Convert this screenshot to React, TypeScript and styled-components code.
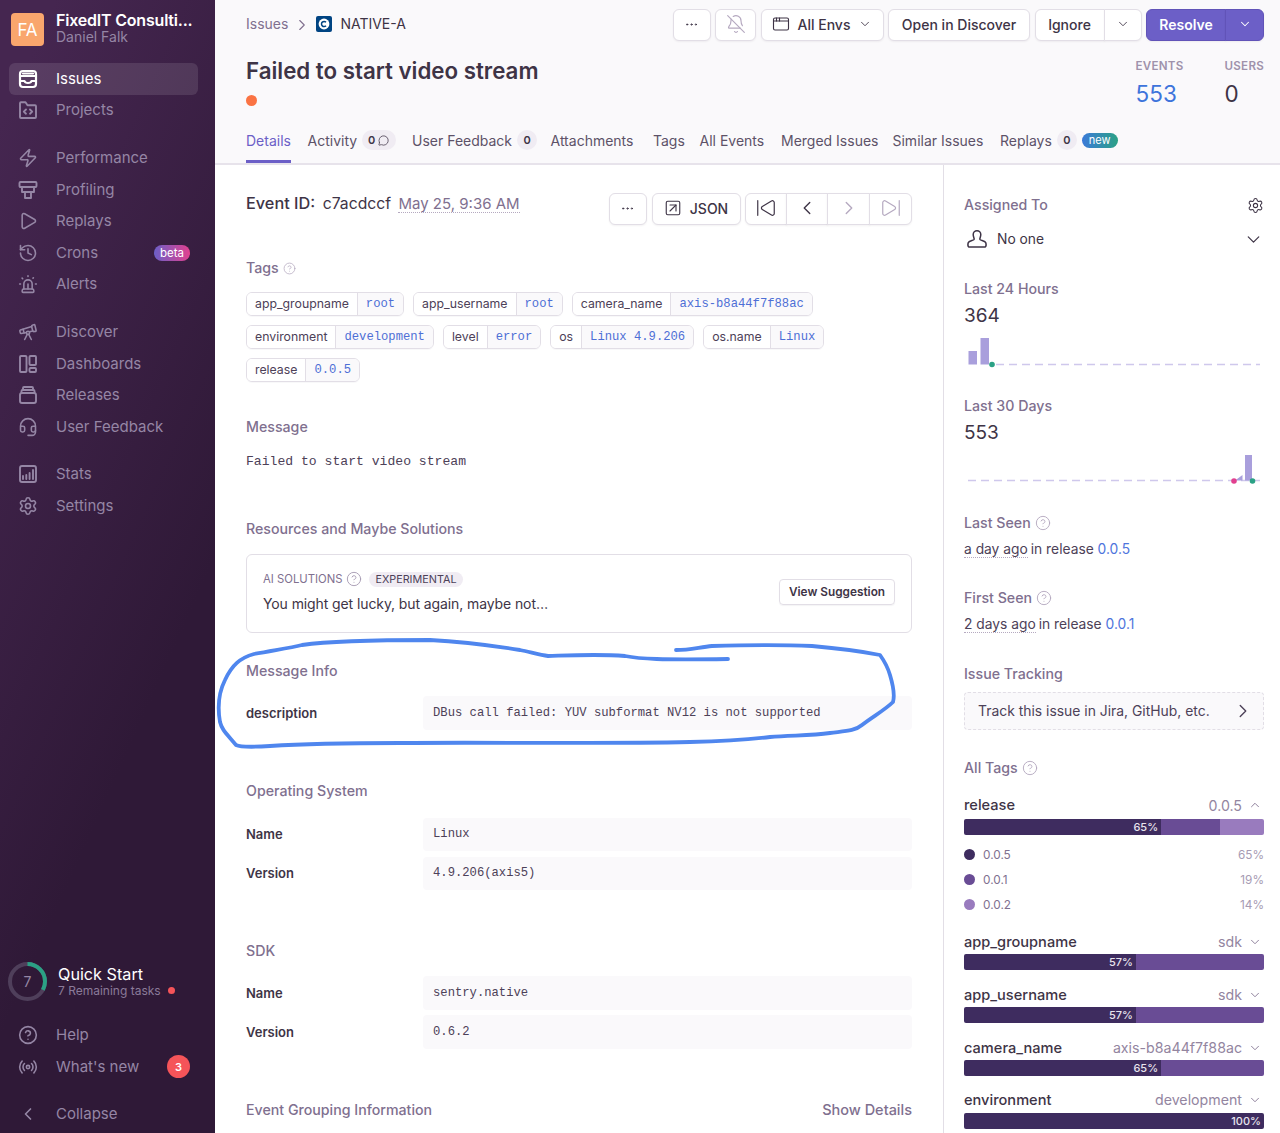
import React from "react";
import styled, { createGlobalStyle } from "styled-components";
import {
  BellOff, ChevronDown, ChevronLeft, ChevronRight, ChevronUp, CircleHelp, Ellipsis, Headset,
  History, MessageCircle, Play, Radio, Settings, SkipBack, SkipForward, Siren, SquareArrowUpRight,
  Telescope, Zap, AppWindow,
} from "lucide-react";

const Global = createGlobalStyle`
  html, body { margin: 0; padding: 0; background: #fff; }
  body { font-family: Inter, "Liberation Sans", sans-serif; color: #3e3446; }
  * { box-sizing: border-box; }
`;

const mono = `"Liberation Mono", "DejaVu Sans Mono", monospace`;

const Page = styled.div`
  position: relative;
  display: flex;
  width: 1280px;
  height: 1133px;
  overflow: hidden;
`;

const Sidebar = styled.nav`
  width: 215px;
  flex: none;
  display: flex;
  flex-direction: column;
  background: linear-gradient(294.17deg, #2f1937 35.57%, #452650 92.42%);
  color: #9c8ba8;
`;

const OrgHeader = styled.div`
  display: flex;
  gap: 12px;
  padding: 13px 0 0 11px;
  height: 63px;
`;

const OrgAvatar = styled.div`
  width: 33px;
  height: 33px;
  border-radius: 4px;
  background: #f9a66d;
  color: #fff;
  font-size: 17px;
  display: flex;
  align-items: center;
  justify-content: center;
`;

const OrgText = styled.div`
  display: flex;
  flex-direction: column;
`;

const OrgName = styled.div`
  color: #fff;
  font-size: 16px;
  font-weight: 600;
  line-height: 15px;
  letter-spacing: -0.2px;
`;

const OrgUser = styled.div`
  color: #9586a5;
  font-size: 14px;
  line-height: 17px;
`;

const NavGroup = styled.div<{ $gap?: number }>`
  display: flex;
  flex-direction: column;
  margin-top: ${(p) => p.$gap ?? 16}px;
  padding: 0 17px 0 9px;
`;

const NavItem = styled.div<{ $active?: boolean }>`
  height: 31.6px;
  display: flex;
  align-items: center;
  padding-left: 9px;
  gap: 18px;
  border-radius: 6px;
  font-size: 15px;
  color: ${(p) => (p.$active ? "#fff" : "#9586a5")};
  background: ${(p) => (p.$active ? "rgba(255,255,255,0.11)" : "transparent")};
  svg { flex: none; width: 20px; height: 20px; }
`;

const NavLabel = styled.span`
  flex: 1;
  position: relative;
  top: -0.5px;
`;

const BetaBadge = styled.span`
  background: linear-gradient(90deg, #6c5fc7, #e1408f);
  color: #fff;
  font-size: 11.5px;
  line-height: 16px;
  padding: 0 6px;
  border-radius: 9px;
  margin-right: 8px;
`;

const CountBadge = styled.span`
  width: 23px;
  height: 23px;
  border-radius: 50%;
  background: #f55459;
  color: #fff;
  font-size: 11px;
  font-weight: 600;
  display: flex;
  align-items: center;
  justify-content: center;
  margin-right: 8px;
`;

const SideSpacer = styled.div`
  flex: 1;
`;

const SideSpacerEnd = styled.div`
  height: 3px;
  flex: none;
`;

const QuickStart = styled.div`
  display: flex;
  align-items: center;
  gap: 11px;
  padding-left: 8px;
  margin-bottom: 18px;
`;

const RingBox = styled.div`
  width: 39px;
  height: 39px;
  display: grid;
  place-items: center;
  font-size: 14px;
  color: #9586a5;
  svg { grid-area: 1 / 1; }
  span { grid-area: 1 / 1; }
`;

const QuickTitle = styled.div`
  color: #fff;
  font-size: 16.2px;
  line-height: 18px;
`;

const QuickSub = styled.div`
  display: flex;
  align-items: center;
  gap: 7px;
  color: #8b7b99;
  font-size: 12px;
  line-height: 16px;
`;

const RedDot = styled.i`
  width: 7px;
  height: 7px;
  border-radius: 50%;
  background: #f55459;
`;

const Content = styled.div`
  flex: 1;
  display: flex;
  flex-direction: column;
  min-width: 0;
`;

const Header = styled.header`
  height: 165px;
  flex: none;
  background: #faf9fb;
  border-bottom: 2px solid #e7e3eb;
  padding: 9px 16px 0 31px;
  display: flex;
  flex-direction: column;
`;

const TopRow = styled.div`
  display: flex;
  align-items: center;
  height: 32px;
`;

const Breadcrumbs = styled.div`
  flex: 1;
  display: flex;
  align-items: center;
  font-size: 14px;
  color: #80708f;
  margin-top: -3px;
  svg { flex: none; }
`;

const CrumbSep = styled.span`
  display: flex;
  margin: 2px 5px 0 5px;
  color: #80708f;
`;

const ShortId = styled.span`
  color: #3e3446;
  margin-left: 8px;
`;

const Actions = styled.div`
  display: flex;
  gap: 4.5px;
`;

const Btn = styled.div<{ $w: number; $primary?: boolean; $muted?: boolean }>`
  width: ${(p) => p.$w}px;
  height: 32px;
  display: flex;
  align-items: center;
  justify-content: center;
  gap: 8px;
  padding-bottom: 2px;
  background: ${(p) => (p.$primary ? "#6c5fc7" : "#fff")};
  color: ${(p) => (p.$primary ? "#fff" : p.$muted ? "#b5a9c0" : "#3e3446")};
  border: 1px solid ${(p) => (p.$primary ? "#6153b8" : "#e2dee6")};
  border-radius: 6px;
  box-shadow: 0 1px 2px rgba(43, 34, 51, 0.06);
  font-size: 14px;
  font-weight: ${(p) => (p.$primary ? 600 : 500)};
  white-space: nowrap;
`;

const BtnGroup = styled.div`
  display: flex;
  & > div { border-radius: 0; box-shadow: 0 1px 2px rgba(43, 34, 51, 0.06); }
  & > div + div { margin-left: -1px; }
  & > div:first-child { border-radius: 6px 0 0 6px; }
  & > div:last-child { border-radius: 0 6px 6px 0; }
`;

const TitleRow = styled.div`
  display: flex;
  justify-content: space-between;
  margin-top: 15px;
  height: 52px;
`;

const Title = styled.h1`
  margin: 0;
  font-size: 22.3px;
  line-height: 30px;
  font-weight: 600;
  color: #3e3446;
`;

const LevelDot = styled.div`
  width: 11px;
  height: 11px;
  border-radius: 50%;
  background: #fa7343;
  margin-top: 8.5px;
`;

const Stats = styled.div`
  display: flex;
  gap: 41px;
`;

const Stat = styled.div`
  display: flex;
  flex-direction: column;
`;

const StatLabel = styled.div`
  font-size: 11.6px;
  font-weight: 600;
  line-height: 20px;
  color: #9f92ab;
  letter-spacing: 0.25px;
`;

const StatValue = styled.div<{ $link?: boolean }>`
  font-size: 22.5px;
  line-height: 30px;
  margin-top: 3px;
  color: ${(p) => (p.$link ? "#3d74db" : "#3e3446")};
`;

const Tabs = styled.div`
  display: flex;
  gap: 16.5px;
  margin-top: auto;
  height: 46px;
`;

const Tab = styled.div<{ $active?: boolean; $w: number }>`
  width: ${(p) => p.$w}px;
  display: flex;
  align-items: center;
  gap: 5px;
  height: 46px;
  font-size: 14px;
  color: ${(p) => (p.$active ? "#6c5fc7" : "#5d5268")};
  border-bottom: 3px solid ${(p) => (p.$active ? "#6c5fc7" : "transparent")};
  padding-top: 3px;
  white-space: nowrap;
`;

const TabPill = styled.span`
  display: inline-flex;
  align-items: center;
  gap: 3px;
  height: 20px;
  min-width: 20px;
  justify-content: center;
  padding: 0 6px;
  border-radius: 10px;
  background: #f0ecf3;
  color: #3e3446;
  font-size: 11px;
  font-weight: 600;
`;

const NewBadge = styled.span`
  background: linear-gradient(90deg, #3b7ad9, #2ba185);
  color: #fff;
  font-size: 11px;
  line-height: 15px;
  padding: 0 7px;
  border-radius: 8px;
  margin-left: 0;
`;

const Body = styled.div`
  flex: 1;
  display: flex;
  min-height: 0;
`;

const MainCol = styled.main`
  width: 729px;
  flex: none;
  border-right: 1px solid #e2dee6;
  padding: 28px 31px 0;
`;

const EventRow = styled.div`
  display: flex;
  height: 32px;
  justify-content: space-between;
`;

const EventInfo = styled.div`
  display: flex;
  align-items: baseline;
  font-size: 15.7px;
  line-height: 20px;
  gap: 7.5px;
`;

const EventLabel = styled.b`
  font-weight: 500;
  font-size: 16.3px;
`;

const EventDate = styled.span`
  color: #80708f;
  font-size: 15px;
  border-bottom: 1px dotted #b5a9c0;
  line-height: 17px;
`;

const EventButtons = styled.div`
  display: flex;
  gap: 4.5px;
`;

const SectionHead = styled.h3<{ $top: number }>`
  display: flex;
  align-items: center;
  justify-content: space-between;
  margin: ${(p) => p.$top}px 0 0;
  font-size: 14.2px;
  line-height: 20px;
  font-weight: 500;
  color: #80708f;
`;

const HeadLabel = styled.span`
  display: flex;
  align-items: center;
  gap: 4px;
  svg { color: #b5a9c0; }
`;

const ShowDetails = styled.span`
  color: #80708f;
  font-size: 14.5px;
`;

const TagList = styled.div`
  display: flex;
  flex-wrap: wrap;
  gap: 9px 9px;
  margin-top: 14px;
`;

const TagBox = styled.div`
  display: flex;
  height: 24px;
  border: 1px solid #e2dee6;
  border-radius: 6px;
  overflow: hidden;
  box-shadow: 0 1px 1px rgba(43, 34, 51, 0.03);
`;

const TagKey = styled.span`
  padding: 0 8px 2px;
  display: flex;
  align-items: center;
  font-size: 12.3px;
  color: #4d4158;
  background: #fff;
`;

const TagValue = styled.span`
  padding: 0 8px;
  display: flex;
  align-items: center;
  font-family: ${mono};
  font-size: 12.2px;
  color: #4e6fd6;
  background: #faf9fb;
  border-left: 1px solid #e2dee6;
`;

const MessageText = styled.div`
  margin-top: 15px;
  margin-bottom: -1px;
  font-family: ${mono};
  font-size: 13.1px;
  line-height: 20px;
  color: #4d4158;
`;

const AiCard = styled.div`
  margin-top: 15px;
  height: 79px;
  border: 1px solid #e2dee6;
  border-radius: 6px;
  padding: 14px 16px 0;
  display: flex;
  align-items: center;
  justify-content: space-between;
`;

const AiText = styled.div`
  display: flex;
  flex-direction: column;
  margin-top: -18px;
`;

const AiTitle = styled.div`
  display: flex;
  align-items: center;
  gap: 4px;
  font-size: 11.3px;
  color: #80708f;
  svg { color: #a79bb3; }
`;

const ExpBadge = styled.span`
  margin-left: 3px;
  background: #f0ecf3;
  color: #4d4158;
  font-size: 10.8px;
  line-height: 15px;
  padding: 0 6px;
  border-radius: 8px;
`;

const AiBody = styled.div`
  font-size: 14px;
  margin-top: 8px;
  letter-spacing: -0.1px;
`;

const Suggest = styled.div`
  height: 26px;
  width: 116px;
  margin-top: -17px;
  display: flex;
  align-items: center;
  justify-content: center;
  border: 1px solid #e2dee6;
  border-radius: 4px;
  font-size: 11.8px;
  font-weight: 600;
  color: #3e3446;
  box-shadow: 0 1px 1px rgba(43, 34, 51, 0.05);
`;

const KvTable = styled.div<{ $top: number }>`
  display: flex;
  flex-direction: column;
  gap: 5.5px;
  margin-top: ${(p) => p.$top}px;
`;

const KvRow = styled.div`
  display: grid;
  grid-template-columns: 177px 1fr;
  height: 33.5px;
  align-items: center;
`;

const KvKey = styled.div`
  font-size: 13px;
  font-weight: 600;
  color: #3e3446;
`;

const KvValue = styled.div`
  height: 100%;
  display: flex;
  align-items: center;
  padding-left: 10px;
  border-radius: 4px;
  background: #faf9fb;
  font-family: ${mono};
  font-size: 12.2px;
  color: #4d4158;
`;

const SideCol = styled.aside`
  flex: 1;
  padding: 30px 16px 0 20px;
`;

const SideHead = styled.div<{ $top: number }>`
  display: flex;
  align-items: center;
  justify-content: space-between;
  margin-top: ${(p) => p.$top}px;
  font-size: 14.2px;
  line-height: 20px;
  font-weight: 500;
  color: #80708f;
`;

const AssignRow = styled.div`
  display: flex;
  align-items: center;
  margin-top: 14px;
  height: 20px;
  font-size: 13.8px;
  padding-left: 2px;
  gap: 9px;
  color: #3e3446;
`;

const Grow = styled.span`
  flex: 1;
`;

const BigNum = styled.div`
  margin-top: 7px;
  margin-bottom: -1px;
  font-size: 19px;
  line-height: 20px;
  color: #3e3446;
`;

const Chart = styled.svg`
  display: block;
  margin-top: 10px;
`;

const SeenLine = styled.div`
  margin-top: 6px;
  font-size: 13.8px;
  line-height: 20px;
  color: #4d4158;
`;

const Dotted = styled.span`
  border-bottom: 1px dotted #b5a9c0;
  margin-right: 3px;
`;

const Link = styled.span`
  color: #4e74dd;
`;

const TrackBox = styled.div`
  margin-top: 8px;
  height: 38px;
  display: flex;
  align-items: center;
  justify-content: space-between;
  padding: 0 9px 0 13px;
  background: #faf9fb;
  border: 1px dashed #e2dee6;
  border-radius: 4px;
  font-size: 13.9px;
  color: #4d4158;
`;

const BarHead = styled.div<{ $top: number }>`
  display: flex;
  align-items: center;
  justify-content: space-between;
  margin-top: ${(p) => p.$top}px;
  height: 20px;
  font-size: 14.6px;
  font-weight: 500;
  color: #3e3446;
`;

const BarValue = styled.span`
  display: flex;
  align-items: center;
  gap: 6px;
  padding-right: 2px;
  font-size: 14.2px;
  font-weight: 400;
  color: #93859f;
  svg { color: #80708f; }
`;

const Bar = styled.div<{ $top: number }>`
  display: flex;
  height: 16px;
  margin-top: ${(p) => p.$top}px;
  border-radius: 2px;
  overflow: hidden;
`;

const BarSeg = styled.div<{ $c: string; $w: number }>`
  width: ${(p) => p.$w}%;
  background: ${(p) => p.$c};
  color: #e8e4ee;
  font-size: 11px;
  font-weight: 500;
  line-height: 16px;
  text-align: right;
  padding-right: 3px;
`;

const Legend = styled.div`
  margin-top: 7px;
  margin-bottom: -0.5px;
`;

const LegendRow = styled.div`
  display: flex;
  align-items: center;
  height: 25px;
  font-size: 11.8px;
  color: #80708f;
`;

const LegendDot = styled.i<{ $c: string }>`
  width: 11px;
  height: 11px;
  border-radius: 50%;
  background: ${(p) => p.$c};
  margin-right: 8px;
`;

const LegendPct = styled.span`
  margin-left: auto;
  color: #a79bb3;
`;

const Scribble = styled.svg`
  position: absolute;
  left: 0;
  top: 0;
  pointer-events: none;
`;

const S = { fill: "none", stroke: "currentColor", strokeWidth: 1.9, strokeLinecap: "round", strokeLinejoin: "round" } as const;
const ICON = 1.9;

const IssuesIcon = () => (
  <svg viewBox="0 0 20 20" {...S} strokeWidth={2.2}>
    <rect x="2" y="2" width="16" height="16" rx="3" />
    <path d="M2 7h16M2 12h4.500c.4 1.400 1.600 2 3.500 2s3.100-.6 3.500-2H18M5 4.500h10" />
  </svg>
);
const ProjectsIcon = () => (
  <svg viewBox="0 0 20 20" {...S}>
    <path d="M2 3.200c0-.6.4-1 1-1h4.500l2 3H17c.6 0 1 .4 1 1V17c0 .6-.4 1-1 1H3c-.6 0-1-.4-1-1z" />
    <path d="M8 9.500 5.800 11.600 8 13.700M12 9.500l2.200 2.100L12 13.700" />
  </svg>
);
const ProfilingIcon = () => (
  <svg viewBox="0 0 20 20" {...S}>
    <rect x="1.500" y="2" width="17" height="5" rx="1" />
    <path d="M4 7v5h12V7M7 12v6h6v-6" />
  </svg>
);
const DashIcon = () => (
  <svg viewBox="0 0 20 20" {...S}>
    <rect x="2" y="2" width="6.500" height="16" rx="1" />
    <rect x="11.500" y="2" width="6.500" height="9" rx="1" />
    <rect x="11.500" y="14" width="6.500" height="4" rx="1" />
  </svg>
);
const ReleaseIcon = () => (
  <svg viewBox="0 0 20 20" {...S}>
    <rect x="2" y="8" width="16" height="10" rx="2" />
    <path d="M3.500 8V6c0-.6.4-1 1-1h11c.6 0 1 .4 1 1v2M5 5V3c0-.6.4-1 1-1h8c.6 0 1 .4 1 1v2" />
  </svg>
);
const StatsIcon = () => (
  <svg viewBox="0 0 20 20" {...S}>
    <rect x="2" y="2" width="16" height="16" rx="2" />
    <path d="M5 15v-3M8.300 15v-4M11.600 15V9M15 15V6" />
  </svg>
);
const ProjectLogo = () => (
  <svg width="16" height="16" viewBox="0 0 16 16">
    <rect width="16" height="16" rx="2" fill="#004482" />
    <circle cx="8" cy="8" r="5.400" fill="#fff" />
    <path d="M10 6.200A2.600 2.600 0 1 0 10 9.800" fill="none" stroke="#004482" strokeWidth="1.500" />
  </svg>
);
const Person = () => (
  <svg width="22" height="20" viewBox="0 0 22 20" fill="none" stroke="currentColor" strokeWidth={1.5} strokeLinejoin="round">
    <path d="M7.200 5.500a3.800 3.800 0 0 1 7.600 0c0 2-1 3.500-1 4.700 0 1.300 5.400 1.400 6 3.600.4 1.500.3 3.600-.5 4.200H2.700c-.8-.6-.9-2.700-.5-4.200.6-2.200 6-2.300 6-3.600 0-1.200-1-2.700-1-4.700z" />
  </svg>
);
const Help = ({ size = 14 }: { size?: number }) => <CircleHelp size={size} strokeWidth={1.4} />;

const tags: [string, string][] = [
  ["app_groupname", "root"],
  ["app_username", "root"],
  ["camera_name", "axis-b8a44f7f88ac"],
  ["environment", "development"],
  ["level", "error"],
  ["os", "Linux 4.9.206"],
  ["os.name", "Linux"],
  ["release", "0.0.5"],
];

const DARK = "#3e2c5f";
const MID = "#694c95";
const LIGHT = "#997bbe";

const scribble =
  "M676 650C690 650 700 647 712 646C745 645 790 645 812 646C835 648 860 651 880 655C885 662 888 668 890 675C893 685 895 695 893 702C885 710 872 717 862 725C855 731 845 731 830 733C810 736 790 735 770 737C745 740 730 741 690 742C600 744 480 742 400 743C340 743 300 744 270 746C255 747 240 747 236 745C226 733 222 730 220 722C217 705 220 690 225 680C232 665 240 658 254 654C275 650 290 648 302 645C330 641 390 640 430 640C470 642 495 646 520 650C530 652 540 655 548 656C580 655 600 654 625 656C640 659 660 660 728 659";

export default function App() {
  return (
    <>
      <Global />
      <Page>
        <Sidebar>
          <OrgHeader>
            <OrgAvatar>FA</OrgAvatar>
            <OrgText>
              <OrgName>FixedIT Consulti...</OrgName>
              <OrgUser>Daniel Falk</OrgUser>
            </OrgText>
          </OrgHeader>
          <NavGroup $gap={0}>
            <NavItem $active><IssuesIcon /><NavLabel>Issues</NavLabel></NavItem>
            <NavItem><ProjectsIcon /><NavLabel>Projects</NavLabel></NavItem>
          </NavGroup>
          <NavGroup>
            <NavItem><Zap strokeWidth={ICON} /><NavLabel>Performance</NavLabel></NavItem>
            <NavItem><ProfilingIcon /><NavLabel>Profiling</NavLabel></NavItem>
            <NavItem><Play strokeWidth={ICON} /><NavLabel>Replays</NavLabel></NavItem>
            <NavItem><History strokeWidth={ICON} /><NavLabel>Crons</NavLabel><BetaBadge>beta</BetaBadge></NavItem>
            <NavItem><Siren strokeWidth={ICON} /><NavLabel>Alerts</NavLabel></NavItem>
          </NavGroup>
          <NavGroup>
            <NavItem><Telescope strokeWidth={ICON} /><NavLabel>Discover</NavLabel></NavItem>
            <NavItem><DashIcon /><NavLabel>Dashboards</NavLabel></NavItem>
            <NavItem><ReleaseIcon /><NavLabel>Releases</NavLabel></NavItem>
            <NavItem><Headset strokeWidth={ICON} /><NavLabel>User Feedback</NavLabel></NavItem>
          </NavGroup>
          <NavGroup>
            <NavItem><StatsIcon /><NavLabel>Stats</NavLabel></NavItem>
            <NavItem><Settings strokeWidth={ICON} /><NavLabel>Settings</NavLabel></NavItem>
          </NavGroup>
          <SideSpacer />
          <QuickStart>
            <RingBox>
              <svg width="39" height="39" viewBox="0 0 39 39">
                <circle cx="19.5" cy="19.5" r="17.5" fill="none" stroke="#4f3f5b" strokeWidth="4" />
                <circle cx="19.5" cy="19.5" r="17.5" fill="none" stroke="#2ba185" strokeWidth="4" strokeDasharray="36 110" transform="rotate(-90 19.5 19.5)" />
              </svg>
              <span>7</span>
            </RingBox>
            <div>
              <QuickTitle>Quick Start</QuickTitle>
              <QuickSub>7 Remaining tasks <RedDot /></QuickSub>
            </div>
          </QuickStart>
          <NavGroup $gap={0}>
            <NavItem><CircleHelp strokeWidth={ICON} /><NavLabel>Help</NavLabel></NavItem>
            <NavItem><Radio strokeWidth={ICON} /><NavLabel>What's new</NavLabel><CountBadge>3</CountBadge></NavItem>
          </NavGroup>
          <NavGroup>
            <NavItem><ChevronLeft strokeWidth={2} /><NavLabel>Collapse</NavLabel></NavItem>
          </NavGroup>
          <SideSpacerEnd />
        </Sidebar>

        <Content>
          <Header>
            <TopRow>
              <Breadcrumbs>
                Issues
                <CrumbSep><ChevronRight size={18} strokeWidth={1.5} /></CrumbSep>
                <ProjectLogo />
                <ShortId>NATIVE-A</ShortId>
              </Breadcrumbs>
              <Actions>
                <Btn $w={38}><Ellipsis size={15} strokeWidth={1.5} /></Btn>
                <Btn $w={41} $muted><BellOff size={20} strokeWidth={1.4} /></Btn>
                <Btn $w={123}><AppWindow size={18} strokeWidth={1.5} />All Envs<ChevronDown size={14} strokeWidth={1.5} /></Btn>
                <Btn $w={142}>Open in Discover</Btn>
                <BtnGroup>
                  <Btn $w={70}>Ignore</Btn>
                  <Btn $w={38}><ChevronDown size={14} strokeWidth={1.5} /></Btn>
                </BtnGroup>
                <BtnGroup>
                  <Btn $w={80} $primary>Resolve</Btn>
                  <Btn $w={39} $primary><ChevronDown size={14} strokeWidth={1.8} /></Btn>
                </BtnGroup>
              </Actions>
            </TopRow>
            <TitleRow>
              <div>
                <Title>Failed to start video stream</Title>
                <LevelDot />
              </div>
              <Stats>
                <Stat>
                  <StatLabel>EVENTS</StatLabel>
                  <StatValue $link>553</StatValue>
                </Stat>
                <Stat>
                  <StatLabel>USERS</StatLabel>
                  <StatValue>0</StatValue>
                </Stat>
              </Stats>
            </TitleRow>
            <Tabs>
              <Tab $active $w={45}>Details</Tab>
              <Tab $w={88}>Activity<TabPill>0<MessageCircle size={13} strokeWidth={1.6} /></TabPill></Tab>
              <Tab $w={122}>User Feedback<TabPill>0</TabPill></Tab>
              <Tab $w={86}>Attachments</Tab>
              <Tab $w={30}>Tags</Tab>
              <Tab $w={65}>All Events</Tab>
              <Tab $w={95}>Merged Issues</Tab>
              <Tab $w={91}>Similar Issues</Tab>
              <Tab $w={117}>Replays<TabPill>0</TabPill><NewBadge>new</NewBadge></Tab>
            </Tabs>
          </Header>

          <Body>
            <MainCol>
              <EventRow>
                <EventInfo>
                  <EventLabel>Event ID:</EventLabel>
                  <span>c7acdccf</span>
                  <EventDate>May 25, 9:36 AM</EventDate>
                </EventInfo>
                <EventButtons>
                  <Btn $w={38.5}><Ellipsis size={15} strokeWidth={1.5} /></Btn>
                  <Btn $w={89}><SquareArrowUpRight size={18} strokeWidth={1.5} />JSON</Btn>
                  <BtnGroup>
                    <Btn $w={42}><SkipBack size={22} strokeWidth={1.3} /></Btn>
                    <Btn $w={42}><ChevronLeft size={22} strokeWidth={1.5} /></Btn>
                    <Btn $w={43} $muted><ChevronRight size={22} strokeWidth={1.5} /></Btn>
                    <Btn $w={43} $muted><SkipForward size={22} strokeWidth={1.3} /></Btn>
                  </BtnGroup>
                </EventButtons>
              </EventRow>

              <SectionHead $top={33}><HeadLabel>Tags <Help size={13} /></HeadLabel></SectionHead>
              <TagList>
                {tags.map(([k, v]) => (
                  <TagBox key={k}>
                    <TagKey>{k}</TagKey>
                    <TagValue>{v}</TagValue>
                  </TagBox>
                ))}
              </TagList>

              <SectionHead $top={35}>Message</SectionHead>
              <MessageText>Failed to start video stream</MessageText>

              <SectionHead $top={48}>Resources and Maybe Solutions</SectionHead>
              <AiCard>
                <AiText>
                  <AiTitle>AI SOLUTIONS <Help size={16} /><ExpBadge>EXPERIMENTAL</ExpBadge></AiTitle>
                  <AiBody>You might get lucky, but again, maybe not…</AiBody>
                </AiText>
                <Suggest>View Suggestion</Suggest>
              </AiCard>

              <SectionHead $top={28}>Message Info</SectionHead>
              <KvTable $top={15}>
                <KvRow>
                  <KvKey>description</KvKey>
                  <KvValue>DBus call failed: YUV subformat NV12 is not supported</KvValue>
                </KvRow>
              </KvTable>

              <SectionHead $top={51}>Operating System</SectionHead>
              <KvTable $top={17}>
                <KvRow><KvKey>Name</KvKey><KvValue>Linux</KvValue></KvRow>
                <KvRow><KvKey>Version</KvKey><KvValue>4.9.206(axis5)</KvValue></KvRow>
              </KvTable>

              <SectionHead $top={51}>SDK</SectionHead>
              <KvTable $top={15}>
                <KvRow><KvKey>Name</KvKey><KvValue>sentry.native</KvValue></KvRow>
                <KvRow><KvKey>Version</KvKey><KvValue>0.6.2</KvValue></KvRow>
              </KvTable>

              <SectionHead $top={51}>
                Event Grouping Information
                <ShowDetails>Show Details</ShowDetails>
              </SectionHead>
            </MainCol>

            <SideCol>
              <SideHead $top={0}>Assigned To<Settings size={17} strokeWidth={1.5} color="#3e3446" /></SideHead>
              <AssignRow>
                <Person />
                <Grow>No one</Grow>
                <ChevronDown size={21} strokeWidth={1.4} />
              </AssignRow>

              <SideHead $top={30}>Last 24 Hours</SideHead>
              <BigNum>364</BigNum>
              <Chart width="300" height="35" viewBox="0 0 300 35">
                <path d="M32 29.5H296" stroke="#cfc8ec" strokeWidth="1.3" strokeDasharray="8 5" />
                <rect x="4.500" y="16" width="8.500" height="13.500" fill="#a99fdc" />
                <rect x="16.500" y="3" width="8.500" height="26.500" fill="#a99fdc" />
                <circle cx="28" cy="29.500" r="2.800" fill="#2ba185" />
              </Chart>

              <SideHead $top={26}>Last 30 Days</SideHead>
              <BigNum>553</BigNum>
              <Chart width="300" height="35" viewBox="0 0 300 35">
                <path d="M4 28.5H296" stroke="#cfc8ec" strokeWidth="1.3" strokeDasharray="8 5" />
                <path d="M271 28.5 278.500 23V28.5Z" fill="#a99fdc" />
                <rect x="281" y="3" width="7" height="25.500" fill="#a99fdc" />
                <circle cx="270" cy="29" r="2.800" fill="#e1408f" />
                <circle cx="288.500" cy="29" r="2.800" fill="#2ba185" />
              </Chart>

              <SideHead $top={26}><HeadLabel>Last Seen <Help size={16} /></HeadLabel></SideHead>
              <SeenLine><Dotted>a day ago</Dotted>in release <Link>0.0.5</Link></SeenLine>

              <SideHead $top={29}><HeadLabel>First Seen <Help size={16} /></HeadLabel></SideHead>
              <SeenLine><Dotted>2 days ago</Dotted>in release <Link>0.0.1</Link></SeenLine>

              <SideHead $top={30}>Issue Tracking</SideHead>
              <TrackBox>Track this issue in Jira, GitHub, etc.<ChevronRight size={22} strokeWidth={1.5} /></TrackBox>

              <SideHead $top={28}><HeadLabel>All Tags <Help size={16} /></HeadLabel></SideHead>

              <BarHead $top={17}>release<BarValue>0.0.5<ChevronUp size={14} strokeWidth={1.5} /></BarValue></BarHead>
              <Bar $top={4}>
                <BarSeg $c={DARK} $w={65.7}>65%</BarSeg>
                <BarSeg $c={MID} $w={19.6} />
                <BarSeg $c={LIGHT} $w={14.7} />
              </Bar>
              <Legend>
                <LegendRow><LegendDot $c={DARK} />0.0.5<LegendPct>65%</LegendPct></LegendRow>
                <LegendRow><LegendDot $c={MID} />0.0.1<LegendPct>19%</LegendPct></LegendRow>
                <LegendRow><LegendDot $c={LIGHT} />0.0.2<LegendPct>14%</LegendPct></LegendRow>
              </Legend>

              <BarHead $top={15}>app_groupname<BarValue>sdk<ChevronDown size={14} strokeWidth={1.5} /></BarValue></BarHead>
              <Bar $top={2}><BarSeg $c={DARK} $w={57.3}>57%</BarSeg><BarSeg $c={MID} $w={42.7} /></Bar>

              <BarHead $top={15}>app_username<BarValue>sdk<ChevronDown size={14} strokeWidth={1.5} /></BarValue></BarHead>
              <Bar $top={2}><BarSeg $c={DARK} $w={57.3}>57%</BarSeg><BarSeg $c={MID} $w={42.7} /></Bar>

              <BarHead $top={15}>camera_name<BarValue>axis-b8a44f7f88ac<ChevronDown size={14} strokeWidth={1.5} /></BarValue></BarHead>
              <Bar $top={2}><BarSeg $c={DARK} $w={65.7}>65%</BarSeg><BarSeg $c={MID} $w={34.3} /></Bar>

              <BarHead $top={14}>environment<BarValue>development<ChevronDown size={14} strokeWidth={1.5} /></BarValue></BarHead>
              <Bar $top={3}><BarSeg $c={DARK} $w={100}>100%</BarSeg></Bar>
            </SideCol>
          </Body>
        </Content>

        <Scribble width="1280" height="1133" viewBox="0 0 1280 1133">
          <path d={scribble} fill="none" stroke="#4f86ee" strokeWidth="3.8" strokeLinecap="round" strokeLinejoin="round" />
        </Scribble>
      </Page>
    </>
  );
}
